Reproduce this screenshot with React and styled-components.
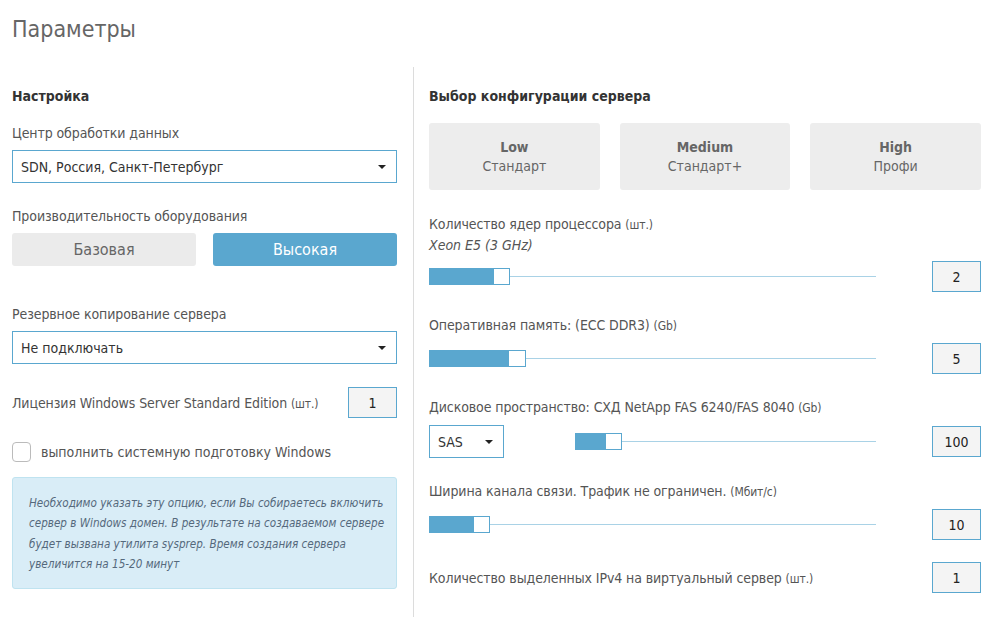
import styled, { createGlobalStyle } from "styled-components";

const GlobalStyle = createGlobalStyle`
    body {
        margin: 0;
        background: #fff;
        font-family: "DejaVu Sans Condensed", "Liberation Sans", sans-serif;
        font-size: 14px;
        color: #555;
    }
`;

const BLUE = "#5aa7cf";

const Page = styled.div`
    width: 1005px;
    padding: 0 12px;
    box-sizing: border-box;
`;

const Title = styled.h1`
    margin: 14px 0 0;
    font-size: 23px;
    line-height: 30px;
    font-weight: normal;
    color: #666;
`;

const Columns = styled.div`
    display: grid;
    grid-template-columns: 385px 1px 551px;
    column-gap: 16px;
    margin-top: 23px;
    & > :last-child {
        margin-left: -1px;
    }
`;

const Divider = styled.div`
    background: #dcdcdc;
    height: 550px;
`;

const Column = styled.div`
    display: flex;
    flex-direction: column;
    padding-top: 19px;
`;

const SectionTitle = styled.h2`
    margin: 0;
    font-size: 14px;
    line-height: 20px;
    font-weight: bold;
    color: #333;
`;

const Label = styled.div`
    line-height: 20px;
    color: #555;
    letter-spacing: -0.1px;
    margin-top: ${props => props.gap ?? 23}px;
`;

const Unit = styled.span`
    font-size: 12px;
`;

const Sub = styled.div`
    font-style: italic;
    line-height: 20px;
    color: #555;
`;

const Select = styled.div`
    display: flex;
    align-items: center;
    justify-content: space-between;
    box-sizing: border-box;
    width: ${props => props.width || "100%"};
    height: 33px;
    margin-top: ${props => props.gap ?? 7}px;
    padding: 0 10px 0 8px;
    border: 1px solid ${BLUE};
    color: #333;
    background: #fff;
`;

const Caret = styled.span`
    width: 0;
    height: 0;
    border-left: 4px solid transparent;
    border-right: 4px solid transparent;
    border-top: 4px solid #222;
`;

const ToggleGroup = styled.div`
    display: grid;
    grid-template-columns: 1fr 1fr;
    column-gap: 17px;
    margin-top: 7px;
`;

const Toggle = styled.div`
    height: 33px;
    border-radius: 3px;
    display: flex;
    align-items: center;
    justify-content: center;
    font-size: 16px;
    background: ${props => props.active ? BLUE : "#ebebeb"};
    color: ${props => props.active ? "#fff" : "#666"};
`;

const FieldRow = styled.div`
    display: flex;
    align-items: center;
    justify-content: space-between;
    letter-spacing: -0.1px;
    margin-top: ${props => props.gap ?? 23}px;
`;

const NumberBox = styled.div`
    box-sizing: border-box;
    width: 49px;
    height: 31px;
    border: 1px solid ${BLUE};
    background: #f4f4f4;
    color: #222;
    letter-spacing: 0;
    display: flex;
    align-items: center;
    justify-content: center;
    flex-shrink: 0;
`;

const CheckRow = styled.label`
    display: flex;
    align-items: center;
    gap: 10px;
    margin-top: 24px;
    line-height: 20px;
`;

const CheckBox = styled.span`
    box-sizing: border-box;
    width: 19px;
    height: 20px;
    border: 1px solid #bbb;
    border-radius: 4px;
    background: #fff;
`;

const Note = styled.div`
    margin-top: 15px;
    padding: 15px 8px 14px 16px;
    background: #d9edf7;
    border: 1px solid #bfe3f0;
    border-radius: 3px;
    font-size: 11.6px;
    font-style: italic;
    line-height: 20.3px;
    color: #55697c;
    white-space: nowrap;
`;

const Presets = styled.div`
    display: grid;
    grid-template-columns: repeat(3, 1fr);
    column-gap: 20px;
    margin-top: 17px;
`;

const Preset = styled.div`
    height: 67px;
    border-radius: 3px;
    background: #ededed;
    color: #666;
    display: flex;
    flex-direction: column;
    align-items: center;
    justify-content: center;
    line-height: 19px;
    b {
        font-weight: bold;
    }
`;

const SliderRow = styled.div`
    display: flex;
    align-items: center;
    height: ${props => props.tall ? 33 : 31}px;
    margin-top: ${props => props.gap ?? 7}px;
`;

const Track = styled.div`
    flex: 1;
    display: flex;
    align-items: center;
    height: 17px;
    margin-left: ${props => props.offset || 0}px;
    margin-right: 56px;
`;

const Fill = styled.div`
    box-sizing: border-box;
    height: 17px;
    background: ${BLUE};
    border: 1px solid ${BLUE};
    flex-shrink: 0;
`;

const Handle = styled.div`
    box-sizing: border-box;
    width: ${props => props.size || 16}px;
    height: 17px;
    background: #fff;
    border: 1px solid ${BLUE};
    border-left: none;
    flex-shrink: 0;
`;

const Rail = styled.div`
    flex: 1;
    height: 1px;
    background: #a9d2e6;
`;

function Slider({ fill, handle, offset }) {
    return (
        <Track offset={offset}>
            <Fill style={{ width: fill }} />
            <Handle size={handle} />
            <Rail />
        </Track>
    );
}

export default function App() {
    return (
        <Page>
            <GlobalStyle />
            <Title>Параметры</Title>
            <Columns>
                <Column>
                    <SectionTitle>Настройка</SectionTitle>
                    <Label gap={17}>Центр обработки данных</Label>
                    <Select>SDN, Россия, Санкт-Петербург<Caret /></Select>

                    <Label gap={23}>Производительность оборудования</Label>
                    <ToggleGroup>
                        <Toggle>Базовая</Toggle>
                        <Toggle active>Высокая</Toggle>
                    </ToggleGroup>

                    <Label gap={38}>Резервное копирование сервера</Label>
                    <Select>Не подключать<Caret /></Select>

                    <FieldRow>
                        <span>Лицензия Windows Server Standard Edition <Unit>(шт.)</Unit></span>
                        <NumberBox>1</NumberBox>
                    </FieldRow>

                    <CheckRow>
                        <CheckBox />
                        выполнить системную подготовку Windows
                    </CheckRow>

                    <Note>
                        Необходимо указать эту опцию, если Вы собираетесь включить<br />
                        сервер в Windows домен. В результате на создаваемом сервере<br />
                        будет вызвана утилита sysprep. Время создания сервера<br />
                        увеличится на 15-20 минут
                    </Note>
                </Column>

                <Divider />

                <Column>
                    <SectionTitle>Выбор конфигурации сервера</SectionTitle>
                    <Presets>
                        <Preset><b>Low</b>Стандарт</Preset>
                        <Preset><b>Medium</b>Стандарт+</Preset>
                        <Preset><b>High</b>Профи</Preset>
                    </Presets>

                    <Label gap={24}>Количество ядер процессора <Unit>(шт.)</Unit></Label>
                    <Sub>Xeon E5 (3 GHz)</Sub>
                    <SliderRow gap={6}>
                        <Slider fill={65} handle={16} />
                        <NumberBox>2</NumberBox>
                    </SliderRow>

                    <Label>Оперативная память: (ECC DDR3) <Unit>(Gb)</Unit></Label>
                    <SliderRow>
                        <Slider fill={80} handle={17} />
                        <NumberBox>5</NumberBox>
                    </SliderRow>

                    <Label>Дисковое пространство: СХД NetApp FAS 6240/FAS 8040 <Unit>(Gb)</Unit></Label>
                    <SliderRow tall>
                        <Select width="75px" gap={0}>SAS<Caret /></Select>
                        <Slider fill={31} handle={16} offset={71} />
                        <NumberBox>100</NumberBox>
                    </SliderRow>

                    <Label>Ширина канала связи. Трафик не ограничен. <Unit>(Мбит/с)</Unit></Label>
                    <SliderRow>
                        <Slider fill={45} handle={16} />
                        <NumberBox>10</NumberBox>
                    </SliderRow>

                    <FieldRow gap={22}>
                        <span>Количество выделенных IPv4 на виртуальный сервер <Unit>(шт.)</Unit></span>
                        <NumberBox>1</NumberBox>
                    </FieldRow>
                </Column>
            </Columns>
        </Page>
    );
}
